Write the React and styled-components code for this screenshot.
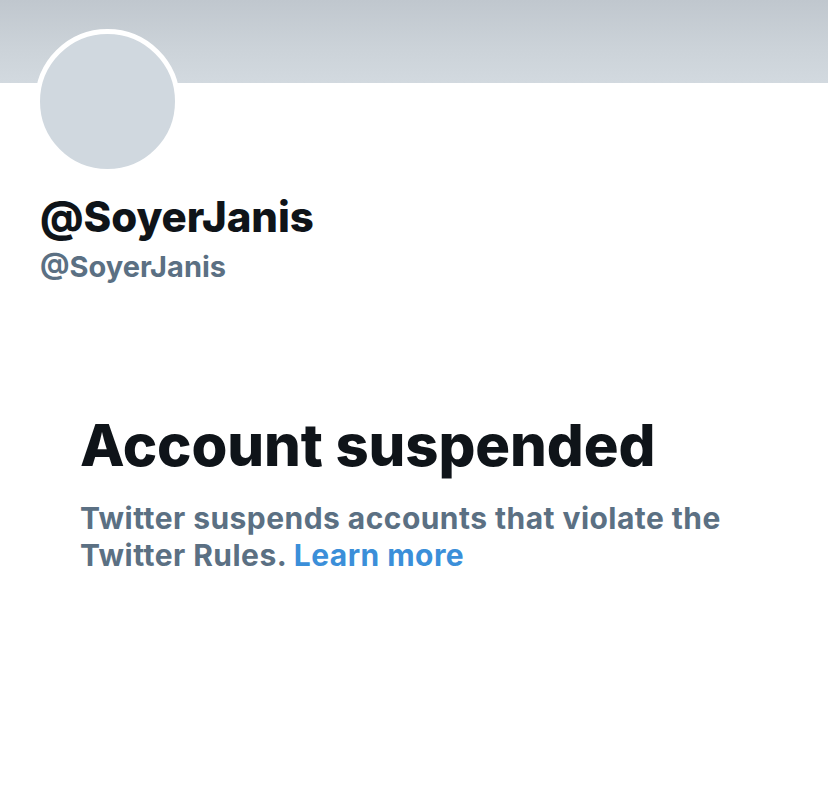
import React from "react";
import styled, { createGlobalStyle } from "styled-components";

const GlobalStyle = createGlobalStyle`
  html, body {
    margin: 0;
    padding: 0;
    background: #ffffff;
  }
  body {
    font-family: Inter, "Liberation Sans", Arial, sans-serif;
    -webkit-font-smoothing: antialiased;
  }
`;

const Page = styled.div`
  width: 828px;
  min-height: 791px;
  background: #ffffff;
  overflow: hidden;
`;

const Banner = styled.div`
  height: 83px;
  background: linear-gradient(180deg, #c0c7ce 0%, #ccd3d9 60%, #d2d9df 100%);
`;

const ProfileHead = styled.div`
  padding: 0 40px;
  display: flex;
  flex-direction: column;
  align-items: flex-start;
`;

const Avatar = styled.div`
  width: 135px;
  height: 135px;
  margin-top: -54px;
  margin-left: -5px;
  border: 5px solid #ffffff;
  border-radius: 50%;
  background: #d0d8df;
`;

const DisplayName = styled.h1`
  margin: 18px 0 0;
  font-size: 42px;
  line-height: 1.2;
  font-weight: 800;
  color: #0f1419;
  letter-spacing: -0.05px;
`;

const Handle = styled.div`
  margin-top: 8px;
  font-size: 29px;
  line-height: 1.2;
  font-weight: 700;
  color: #5b7083;
`;

const Notice = styled.section`
  padding: 126px 80px 0;
`;

const Title = styled.h2`
  margin: 0;
  font-size: 58px;
  line-height: 1.2;
  font-weight: 800;
  letter-spacing: -0.1px;
  color: #0f1419;
`;

const Message = styled.p`
  margin: 19px 0 0;
  max-width: 680px;
  font-size: 30px;
  line-height: 37.7px;
  font-weight: 700;
  letter-spacing: 0.45px;
  color: #5b7083;
`;

const Link = styled.a`
  color: #3b8fd9;
  text-decoration: none;
`;

export default function App() {
  return (
    <>
      <GlobalStyle />
      <Page>
        <Banner />
        <ProfileHead>
          <Avatar />
          <DisplayName>@SoyerJanis</DisplayName>
          <Handle>@SoyerJanis</Handle>
        </ProfileHead>
        <Notice>
          <Title>Account suspended</Title>
          <Message>
            Twitter suspends accounts that violate the Twitter Rules.{" "}
            <Link href="#">Learn more</Link>
          </Message>
        </Notice>
      </Page>
    </>
  );
}
